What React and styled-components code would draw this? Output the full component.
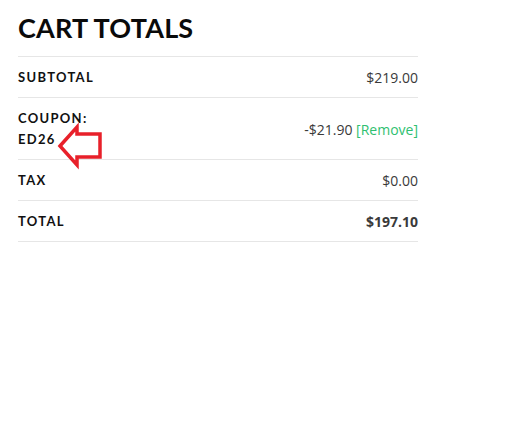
import React from 'react';
import styled, { createGlobalStyle } from 'styled-components';

const GlobalStyle = createGlobalStyle`
    body {
        margin: 0;
        background: #fff;
    }
`;

const Totals = styled.section`
    width: 400px;
    padding: 11px 18px;
    position: relative;
`;

const Title = styled.h2`
    font-family: Lato, 'Liberation Sans', sans-serif;
    font-weight: 700;
    font-size: 27px;
    line-height: 34px;
    letter-spacing: 0.2px;
    color: #0a0a0a;
    margin: 0 0 11px;
`;

const Table = styled.div`
    border-top: 1px solid #e6e6e6;
`;

const Row = styled.div`
    display: flex;
    justify-content: space-between;
    align-items: center;
    padding: 10px 0 9px;
    border-bottom: 1px solid #e6e6e6;
`;

const Label = styled.div`
    font-family: Lato, 'Liberation Sans', sans-serif;
    font-weight: 700;
    font-size: 13px;
    line-height: 21px;
    letter-spacing: 1.3px;
    text-transform: uppercase;
    color: #111;
`;

const Value = styled.div`
    font-family: 'Open Sans', 'Liberation Sans', sans-serif;
    font-size: 14px;
    line-height: 21px;
    font-weight: ${p => (p.$bold ? 700 : 400)};
    color: #3a3a3a;
`;

const RemoveLink = styled.a`
    color: #2fbf71;
    text-decoration: none;
    cursor: pointer;
`;

const Arrow = styled.svg`
    position: absolute;
    left: 56px;
    top: 122px;
`;

const App = () => (
    <>
        <GlobalStyle />
        <Totals>
            <Title>CART TOTALS</Title>
            <Table>
                <Row>
                    <Label>Subtotal</Label>
                    <Value>$219.00</Value>
                </Row>
                <Row>
                    <Label>Coupon:<br />ED26</Label>
                    <Value>-$21.90 <RemoveLink>[Remove]</RemoveLink></Value>
                </Row>
                <Row>
                    <Label>Tax</Label>
                    <Value>$0.00</Value>
                </Row>
                <Row>
                    <Label>Total</Label>
                    <Value $bold>$197.10</Value>
                </Row>
            </Table>
            <Arrow width="50" height="48" viewBox="0 0 50 48">
                <path
                    d="M4 24 L21 5 L21 12 L44 12 L44 35 L21 35 L21 43 Z"
                    fill="#fff"
                    stroke="#e8202a"
                    strokeWidth="3.5"
                    strokeLinejoin="miter"
                />
            </Arrow>
        </Totals>
    </>
);

export default App;
